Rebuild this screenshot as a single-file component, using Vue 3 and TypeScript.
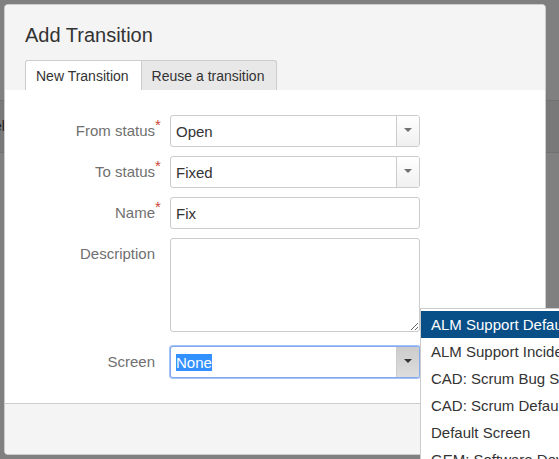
<script setup lang="ts">
import { nextTick, onMounted, ref } from 'vue'

type Tab = 'new' | 'reuse'

const tabs: { id: Tab; label: string }[] = [
  { id: 'new', label: 'New Transition' },
  { id: 'reuse', label: 'Reuse a transition' },
]
const statuses = ['Open', 'Fixed']
const screens = [
  'ALM Support Default',
  'ALM Support Incident',
  'CAD: Scrum Bug Screen',
  'CAD: Scrum Default',
  'Default Screen',
  'GEM: Software Dev',
]

const activeTab = ref<Tab>('new')
const fromStatus = ref('Open')
const toStatus = ref('Fixed')
const name = ref('Fix')
const description = ref('')
const screen = ref('None')
const menuOpen = ref(true)
const highlighted = ref(0)
const screenInput = ref<HTMLInputElement | null>(null)

function choose(option: string) {
  screen.value = option
  menuOpen.value = false
}

onMounted(async () => {
  await nextTick()
  screenInput.value?.focus({ preventScroll: true })
  screenInput.value?.select()
})
</script>

<template>
  <div class="page">
    <div class="underlay" aria-hidden="true">
      <div class="underlay-row">el</div>
    </div>

    <section class="dialog" role="dialog" aria-labelledby="dialog-title">
      <header class="header">
        <h2 id="dialog-title" class="title">Add Transition</h2>
        <div class="tabs" role="tablist">
          <button
            v-for="tab in tabs"
            :key="tab.id"
            type="button"
            role="tab"
            class="tab"
            :class="{ active: activeTab === tab.id }"
            :aria-selected="activeTab === tab.id"
            @click="activeTab = tab.id"
          >
            {{ tab.label }}
          </button>
        </div>
      </header>

      <form class="form" @submit.prevent>
        <div class="row">
          <label class="label" for="from-status">From status<span class="required">*</span></label>
          <div class="control">
            <select id="from-status" v-model="fromStatus" class="field">
              <option v-for="s in statuses" :key="s">{{ s }}</option>
            </select>
            <span class="arrow"><svg width="8" height="4" viewBox="0 0 8 4"><path d="M0 0h8L4 4z" /></svg></span>
          </div>
        </div>
        <div class="row">
          <label class="label" for="to-status">To status<span class="required">*</span></label>
          <div class="control">
            <select id="to-status" v-model="toStatus" class="field">
              <option v-for="s in statuses" :key="s">{{ s }}</option>
            </select>
            <span class="arrow"><svg width="8" height="4" viewBox="0 0 8 4"><path d="M0 0h8L4 4z" /></svg></span>
          </div>
        </div>
        <div class="row">
          <label class="label" for="name">Name<span class="required">*</span></label>
          <div class="control">
            <input id="name" v-model="name" class="field" type="text" />
          </div>
        </div>
        <div class="row">
          <label class="label" for="description">Description</label>
          <div class="control">
            <textarea id="description" v-model="description" class="field area"></textarea>
          </div>
        </div>
        <div class="row screen-row">
          <label class="label" for="screen">Screen</label>
          <div class="control">
            <input
              id="screen"
              ref="screenInput"
              v-model="screen"
              class="field"
              type="text"
              role="combobox"
              autocomplete="off"
              aria-controls="screen-options"
              :aria-expanded="menuOpen"
            />
            <button
              type="button"
              class="arrow pressed"
              aria-label="Show screens"
              @click="menuOpen = !menuOpen"
            >
              <svg width="8" height="4" viewBox="0 0 8 4"><path d="M0 0h8L4 4z" /></svg>
            </button>
            <ul v-if="menuOpen" id="screen-options" class="menu" role="listbox">
              <li
                v-for="(option, i) in screens"
                :key="option"
                role="option"
                class="option"
                :class="{ highlighted: i === highlighted }"
                :aria-selected="i === highlighted"
                @mouseenter="highlighted = i"
                @click="choose(option)"
              >
                {{ option }}
              </li>
            </ul>
          </div>
        </div>
      </form>

      <footer class="footer"></footer>
    </section>
  </div>
</template>

<style>
body {
  margin: 0;
}
</style>

<style scoped>
.page {
  position: relative;
  box-sizing: border-box;
  display: flex;
  min-height: 100vh;
  padding: 4px 13px 4px 4px;
  overflow: hidden;
  background: #808080;
  color: #333;
  font: 15px/20px "Liberation Sans", Arial, sans-serif;
}

/* Dimmed page content behind the dialog */
.underlay {
  position: absolute;
  inset: 0;
  padding-top: 100px;
}
.underlay-row {
  height: 51px;
  border: solid #707070;
  border-width: 1px 0;
  background: #797979;
  color: #1a1a1a;
  font-size: 14px;
  line-height: 51px;
  text-indent: -6px;
}

.dialog {
  position: relative;
  flex: 1;
  display: flex;
  flex-direction: column;
  border: 1px solid #ccc;
  border-radius: 4px;
  background: #fff;
}

.header {
  padding: 20px 20px 0;
  border-radius: 3px 3px 0 0;
  background: #f4f4f4;
}
.title {
  margin: 0 0 15px;
  font-size: 20px;
  font-weight: 400;
  line-height: 20px;
}
.tabs {
  display: flex;
}
.tab {
  height: 30px;
  padding: 0 12px 0 10px;
  border: 1px solid #ccc;
  border-width: 1px 1px 0 0;
  border-radius: 0 3px 0 0;
  background: #e8e8e8;
  color: #333;
  font: inherit;
  font-size: 14px;
}
.tab:first-child {
  border-left-width: 1px;
  border-radius: 3px 0 0 0;
}
.tab.active {
  background: #fff;
}

.form {
  flex: 1;
  display: flex;
  flex-direction: column;
  gap: 9px;
  padding: 25px 20px;
}
.row {
  display: flex;
  gap: 15px;
}
.screen-row {
  margin-top: 5px;
}
.label {
  position: relative;
  width: 130px;
  padding-top: 6px;
  color: #707070;
  text-align: right;
}
.required {
  position: absolute;
  top: 0;
  left: 100%;
  color: #d04437;
}
.control {
  position: relative;
  display: flex;
  flex: 0 1 250px;
}
.field {
  box-sizing: border-box;
  width: 100%;
  height: 32px;
  margin: 0;
  padding: 0 5px;
  border: 1px solid #ccc;
  border-radius: 3px;
  outline: none;
  appearance: none;
  background: #fff;
  color: #333;
  font: inherit;
}
select.field {
  padding-top: 1px;
}
.area {
  height: 94px;
  resize: both;
}
.field:focus {
  border-color: #83aaec;
  box-shadow: 0 0 0 1px #a4c2f4;
}
.field::selection {
  background: #3390ff;
  color: #fff;
}

.arrow {
  position: absolute;
  inset: 1px 1px 1px auto;
  box-sizing: border-box;
  display: flex;
  align-items: center;
  justify-content: center;
  width: 23px;
  padding: 0 1px 2px 0;
  border: 0;
  border-left: 1px solid #ccc;
  border-radius: 0 2px 2px 0;
  background: linear-gradient(#fff, #f0f0f0);
  fill: #707070;
  pointer-events: none;
}
.arrow.pressed {
  background: linear-gradient(#ccc, #ddd);
  fill: #333;
  pointer-events: auto;
}

.menu {
  position: absolute;
  top: -38px;
  left: 100%;
  z-index: 1;
  width: 300px;
  margin: 0;
  padding: 2px 0;
  border: 1px solid #ccc;
  background: #fff;
  list-style: none;
  white-space: nowrap;
}
.option {
  padding: 4px 10px 3px;
}
.option.highlighted {
  background: #084e87;
  color: #fff;
}

.footer {
  height: 50px;
  border-top: 1px solid #ccc;
  border-radius: 0 0 3px 3px;
  background: #f4f4f4;
}
</style>
